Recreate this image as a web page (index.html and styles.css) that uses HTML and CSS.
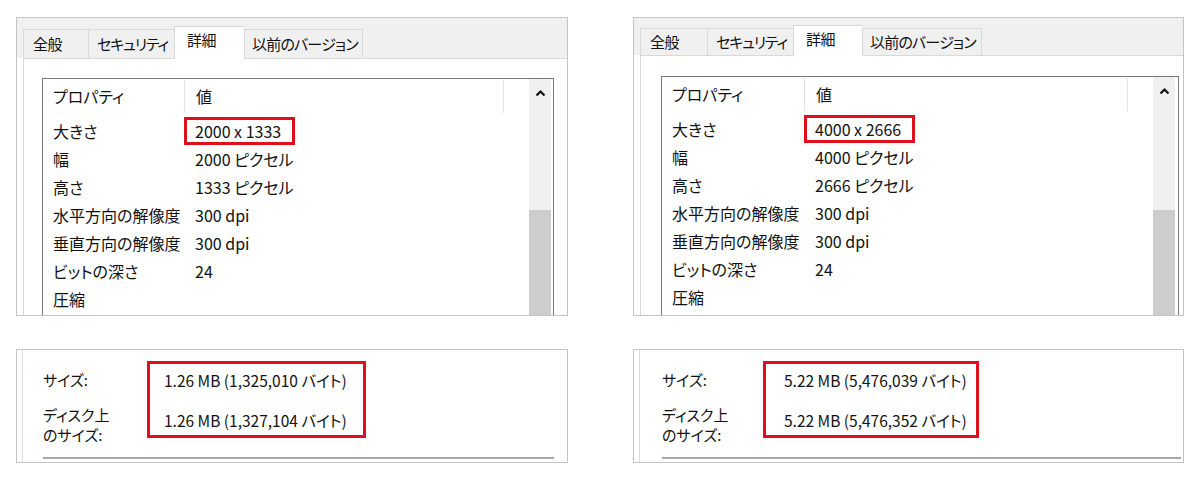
FILE: index.html
```html
<!DOCTYPE html>
<html lang="ja">
<head>
<meta charset="UTF-8" />
<title>プロパティ - 詳細</title>
<link rel="stylesheet" href="styles.css">
</head>
<body>
  <div class="dialog left">
    <div class="props">
      <div class="tabs">
        <div class="tab t1">全般</div>
        <div class="tab t2">セキュリティ</div>
        <div class="tab t3 active">詳細</div>
        <div class="tab t4">以前のバージョン</div>
      </div>
      <div class="page">
        <div class="list">
          <div class="list-body">
            <div class="list-head"><span class="c1">プロパティ</span><span class="c2">値</span><span class="c3"></span></div>
            <div class="row"><span class="c1">大きさ</span><span class="c2"><span class="hl">2000 x 1333</span></span></div>
            <div class="row"><span class="c1">幅</span><span class="c2">2000 ピクセル</span></div>
            <div class="row"><span class="c1">高さ</span><span class="c2">1333 ピクセル</span></div>
            <div class="row"><span class="c1">水平方向の解像度</span><span class="c2">300 dpi</span></div>
            <div class="row"><span class="c1">垂直方向の解像度</span><span class="c2">300 dpi</span></div>
            <div class="row"><span class="c1">ビットの深さ</span><span class="c2">24</span></div>
            <div class="row"><span class="c1">圧縮</span><span class="c2"></span></div>
          </div>
          <div class="scrollbar">
            <div class="arrow"><svg width="11" height="8" viewBox="0 0 11 8"><polyline points="1.5,6.5 5.5,2.5 9.5,6.5" fill="none" stroke="#111" stroke-width="2.2"/></svg></div>
            <div class="thumb"></div>
          </div>
        </div>
      </div>
    </div>

    <div class="sizes">
      <div class="sizes-inner">
        <div class="sizes-row">
          <div class="labels">
            <div class="label">サイズ:</div>
            <div class="label two">ディスク上<br>のサイズ:</div>
          </div>
          <div class="box">
            <div class="value">1.26 MB (1,325,010 バイト)</div>
            <div class="value">1.26 MB (1,327,104 バイト)</div>
          </div>
        </div>
        <div class="rule"></div>
      </div>
    </div>
  </div>

  <div class="dialog right">
    <div class="props">
      <div class="tabs">
        <div class="tab t1">全般</div>
        <div class="tab t2">セキュリティ</div>
        <div class="tab t3 active">詳細</div>
        <div class="tab t4">以前のバージョン</div>
      </div>
      <div class="page">
        <div class="list">
          <div class="list-body">
            <div class="list-head"><span class="c1">プロパティ</span><span class="c2">値</span><span class="c3"></span></div>
            <div class="row"><span class="c1">大きさ</span><span class="c2"><span class="hl">4000 x 2666</span></span></div>
            <div class="row"><span class="c1">幅</span><span class="c2">4000 ピクセル</span></div>
            <div class="row"><span class="c1">高さ</span><span class="c2">2666 ピクセル</span></div>
            <div class="row"><span class="c1">水平方向の解像度</span><span class="c2">300 dpi</span></div>
            <div class="row"><span class="c1">垂直方向の解像度</span><span class="c2">300 dpi</span></div>
            <div class="row"><span class="c1">ビットの深さ</span><span class="c2">24</span></div>
            <div class="row"><span class="c1">圧縮</span><span class="c2"></span></div>
          </div>
          <div class="scrollbar">
            <div class="arrow"><svg width="11" height="8" viewBox="0 0 11 8"><polyline points="1.5,6.5 5.5,2.5 9.5,6.5" fill="none" stroke="#111" stroke-width="2.2"/></svg></div>
            <div class="thumb"></div>
          </div>
        </div>
      </div>
    </div>

    <div class="sizes">
      <div class="sizes-inner">
        <div class="sizes-row">
          <div class="labels">
            <div class="label">サイズ:</div>
            <div class="label two">ディスク上<br>のサイズ:</div>
          </div>
          <div class="box">
            <div class="value">5.22 MB (5,476,039 バイト)</div>
            <div class="value">5.22 MB (5,476,352 バイト)</div>
          </div>
        </div>
        <div class="rule"></div>
      </div>
    </div>
  </div>
</body>
</html>
```

FILE: styles.css
```css
/* Basic reset */
* {
  box-sizing: border-box;
}
html, body {
  margin: 0;
  padding: 0;
  height: 100%;
  background: #fff;
  color: #111;
  font-family: "Noto Sans CJK JP", "Noto Sans", sans-serif;
  font-feature-settings: "palt";
  overflow: hidden;
}
body {
  display: flex;
  padding: 17px 0 0 16px;
  gap: 65px;
}

.dialog {
  width: 552px;
  display: flex;
  flex-direction: column;
}
.dialog.right {
  width: 551px;
}

/* Tab control frame */
.props {
  height: 299px;
  border: 1px solid #c4c4c4;
  overflow: hidden;
  display: flex;
  flex-direction: column;
}
.tabs {
  height: 40px;
  background: #f0f0f0;
  display: flex;
  align-items: flex-end;
  padding-left: 6px;
  flex-shrink: 0;
}
.right .tabs {
  height: 37px;
}
.tab {
  height: 29px;
  border: 1px solid #d9d9d9;
  border-bottom: none;
  border-right: none;
  background: #f0f0f0;
  font-size: 15px;
  letter-spacing: -0.4px;
  line-height: 27px;
  padding-left: 9px;
  white-space: nowrap;
  overflow: hidden;
}
.right .tab {
  height: 27px;
  line-height: 25px;
}
.tab.t1 { width: 65px; }
.tab.t2 { width: 86px; padding-left: 8px; letter-spacing: -1.1px; }
.tab.t3 { width: 70px; }
.tab.t4 { width: 119px; padding-left: 7px; letter-spacing: -0.8px; border-right: 1px solid #d9d9d9; }
.right .tab.t1 { width: 67px; }
.right .tab.t3 { width: 69px; }
.right .tab.t4 { width: 120px; }
.tab.active {
  height: 33px;
  background: #fff;
  margin-bottom: -1px;
  position: relative;
  padding-left: 12px;
  line-height: 26px;
}
.right .tab.active {
  height: 31px;
  line-height: 25px;
}

/* Tab page */
.page {
  flex: 1;
  margin-left: 6px;
  border-top: 1px solid #d9d9d9;
  border-left: 1px solid #d9d9d9;
  background: #fff;
  padding: 19px 13px 0 18px;
}
.right .page {
  padding: 20px 4px 0 20px;
}

/* List view */
.list {
  height: 300px;
  border: 1px solid #787878;
  display: flex;
  font-size: 16px;
}
.list-body {
  flex: 1;
}
.list-head, .row {
  display: grid;
  grid-template-columns: 141px 319px 1fr;
}
.right .list-head, .right .row {
  grid-template-columns: 142px 323px 1fr;
}
.list-head {
  height: 38px;
}
.list-head span {
  height: 33px;
  line-height: 32px;
  margin-top: 1px;
}
.list-head .c2, .list-head .c3 {
  border-left: 1px solid #e3e3e3;
}
.row {
  height: 28px;
  line-height: 28px;
}
.c1 {
  padding-left: 10px;
  white-space: nowrap;
}
.c2 {
  padding-left: 11px;
  white-space: nowrap;
}
.hl {
  display: inline-block;
  height: 28px;
  line-height: 22px;
  margin-left: -11px;
  padding: 0 11px 0 8px;
  border: 3px solid #e0101a;
}

/* Scrollbar */
.scrollbar {
  width: 22px;
  margin-right: 2px;
  display: flex;
  flex-direction: column;
}
.right .scrollbar {
  margin-right: 3px;
}
.arrow {
  height: 131px;
  background: #f0f0f0;
  display: flex;
  justify-content: center;
  padding-top: 10px;
}
.right .arrow {
  height: 133px;
}
.thumb {
  flex: 1;
  background: #cdcdcd;
}

/* Size box */
.sizes {
  margin-top: 33px;
  height: 114px;
  border: 1px solid #c4c4c4;
  padding-left: 5px;
}
.sizes-inner {
  height: 100%;
  border-left: 1px solid #dcdcdc;
  padding: 11px 13px 0 20px;
}
.right .sizes-inner {
  padding: 11px 2px 0 22px;
}
.sizes-row {
  display: flex;
  font-size: 15px;
}
.labels {
  width: 104px;
  padding-top: 9px;
  line-height: 20px;
}
.right .labels {
  width: 101px;
}
.label.two {
  margin-top: 15px;
}
.box {
  width: 219px;
  height: 77px;
  border: 3px solid #e0101a;
  padding: 6px 0 0 14px;
  line-height: 20px;
  font-size: 15.5px;
}
.right .box {
  width: 216px;
  padding-left: 18px;
}
.value + .value {
  margin-top: 20px;
}
.rule {
  margin-top: 12px;
  height: 2px;
  background: #a8a8a8;
}
```
